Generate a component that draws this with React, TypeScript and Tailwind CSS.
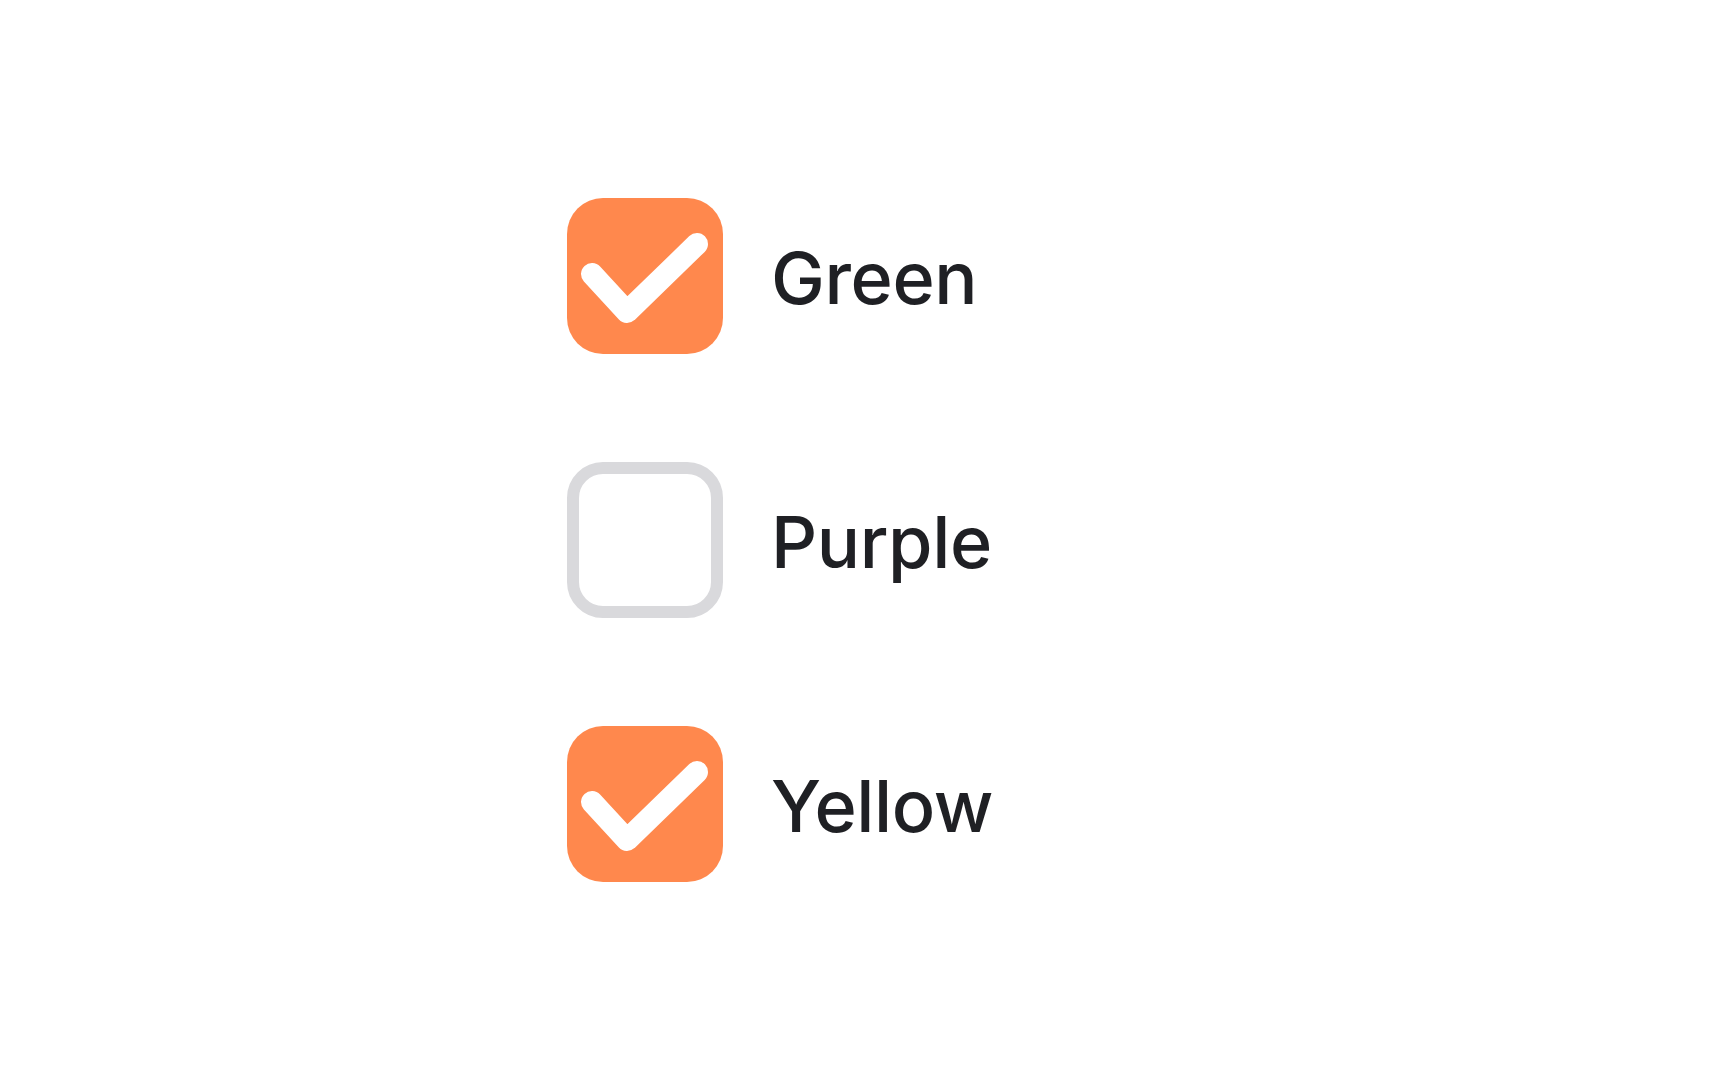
import React from "react";

const Check = () => (
  <svg viewBox="0 0 156 156" className="w-full h-full" fill="none">
    <path
      d="M25 76 L60 114 L130 46"
      stroke="#ffffff"
      strokeWidth="22"
      strokeLinecap="round"
      strokeLinejoin="round"
    />
  </svg>
);

const Item = ({ label, checked }: { label: string; checked: boolean }) => (
  <div className="flex items-center gap-12">
    {checked ? (
      <div className="w-[156px] h-[156px] rounded-[36px] bg-[#ff884d] shrink-0">
        <Check />
      </div>
    ) : (
      <div className="w-[156px] h-[156px] rounded-[36px] border-[12px] border-[#d9d9dc] bg-white shrink-0" />
    )}
    <span className="text-[72px] leading-none pt-1 tracking-[-0.4px] text-[#1f2024] font-medium">{label}</span>
  </div>
);

export default function App() {
  return (
    <div
      className="w-[1728px] h-[1080px] bg-white flex flex-col gap-[108px] pt-[198px] pl-[567px]"
      style={{ fontFamily: "Inter, 'Noto Sans', sans-serif" }}
    >
      <Item label="Green" checked />
      <Item label="Purple" checked={false} />
      <Item label="Yellow" checked />
    </div>
  );
}
